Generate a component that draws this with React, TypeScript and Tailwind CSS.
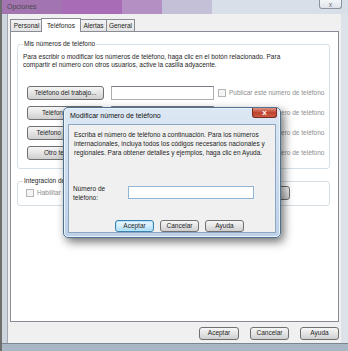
import React from "react";

const btn =
  "flex items-center justify-center border border-[#707070] rounded-[3px] bg-linear-to-b from-[#f6f6f6] via-[#e4e4e4] to-[#cfcfcf] text-[#1e1e1e] leading-none";

function Boton({ label, w, h = "h-[14px]" }: { label: string; w: string; h?: string }) {
  return <div className={`${btn} ${w} ${h} shrink-0`}>{label}</div>;
}

function FilaTelefono({ label }: { label: string }) {
  return (
    <div className="flex items-center h-[14px] ml-[4px]">
      <Boton label={label} w="w-[77px]" />
      <div className="ml-[7px] w-[103px] h-[14px] border border-[#abadb3] border-t-[#7a7d85] bg-white shrink-0" />
      <div className="ml-[4px] w-[8px] h-[8px] border border-[#b5b5b5] bg-[#f4f4f4] shrink-0" />
      <span className="ml-[3px] text-[#8d8d8d] whitespace-nowrap">Publicar este número de teléfono</span>
    </div>
  );
}

function ModalTelefono() {
  return (
    <div className="absolute left-[61px] top-[107px] w-[218px] h-[131px] flex flex-col border border-[#4f6f8f] rounded-[5px] bg-linear-to-b from-[#dde8f4] to-[#bcd0e7] shadow-[3px_4px_10px_rgba(0,0,0,0.55)] ring-1 ring-inset ring-[#e8f4fc]">
      {/* barra de título */}
      <div className="relative h-[16px] flex items-center pl-[6px] text-[#111]">
        <span className="text-[7px]">Modificar número de teléfono</span>
        <div className="absolute right-[3px] top-0 w-[25px] h-[10px] rounded-b-[3px] border border-t-0 border-[#7a2a22] bg-linear-to-b from-[#e39384] via-[#c04530] to-[#c85a40] flex items-center justify-center text-white text-[8px] font-bold leading-none">
          x
        </div>
      </div>
      {/* cliente */}
      <div className="mx-[4px] mb-[4px] flex-1 flex flex-col bg-[#f0f0f0] border border-[#8ea6c2]">
        <p className="pt-[5px] pl-[5px] pr-[4px] leading-[9px] text-[#1e1e1e]">
          Escriba el número de teléfono a continuación. Para los números internacionales, incluya todos los códigos
          necesarios nacionales y regionales. Para obtener detalles y ejemplos, haga clic en Ayuda.
        </p>
        <div className="mt-[27px] flex items-start pl-[4px]">
          <div className="w-[55px] leading-[9px] text-[#1e1e1e]">
            Número de
            <br />
            teléfono:
          </div>
          <div className="mt-[2px] w-[126px] h-[13px] border border-[#8fb5d8] bg-white" />
        </div>
        <div className="mt-[18px] flex gap-[6px] pl-[46px]">
          <div className="flex items-center justify-center w-[39px] h-[12px] rounded-[3px] border border-[#3c7fb1] ring-1 ring-inset ring-[#b8e6fa] bg-linear-to-b from-[#eaf6fd] via-[#d4eefc] to-[#a7d9f5] text-[#1e1e1e] leading-none">
            Aceptar
          </div>
          <Boton label="Cancelar" w="w-[39px]" h="h-[12px]" />
          <Boton label="Ayuda" w="w-[39px]" h="h-[12px]" />
        </div>
      </div>
    </div>
  );
}

export default function App() {
  return (
    <div
      className="relative w-[348px] h-[351px] overflow-hidden flex flex-col bg-[#dde2e8] border-l-2 border-[#6e6e6e] text-[6.5px]"
      style={{ fontFamily: '"Liberation Sans", Arial, sans-serif' }}
    >
      {/* barra de título de la ventana */}
      <div className="relative h-[14px] shrink-0 flex bg-[#c9bfd3]">
        <div className="w-[60px] h-full flex items-center pl-[5px] bg-[#a274b0]">
          <span className="text-[7px] text-[#4a4a4a]">Opciones</span>
        </div>
        <div className="w-[60px] h-full bg-[#a86cb6]" />
        <div className="w-[40px] h-full bg-[#b48fc4]" />
        <div className="w-[50px] h-full bg-[#c3c0d8]" />
        <div className="flex-1 h-full bg-[#d8dfe8]" />
        <div className="absolute right-[6px] top-0 w-[23px] h-[9px] rounded-b-[3px] border border-t-0 border-[#8a939e] bg-linear-to-b from-[#f4f6f8] to-[#dfe4ea] flex items-center justify-center text-[#6a7380] text-[7px] leading-none">
          x
        </div>
      </div>

      <div className="flex flex-1 min-h-0">
        <div className="w-[5px] shrink-0 bg-[#cfd5dc]" />
        {/* área cliente */}
        <div className="w-[334px] shrink-0 flex flex-col bg-[#f0f0f0] border-l border-[#a0a8b2]">
          {/* pestañas */}
          <div className="relative z-10 flex items-end h-[17px] pl-[2px] text-[#1e1e1e]">
            <div className="w-[33px] h-[12px] flex items-center justify-center border border-b-0 border-[#898c95] bg-linear-to-b from-[#f2f2f2] to-[#e3e3e3]">
              Personal
            </div>
            <div className="-ml-[2px] w-[40px] h-[14px] -mb-px flex items-center justify-center border border-b-0 border-[#898c95] bg-white">
              Teléfonos
            </div>
            <div className="-ml-px w-[27px] h-[12px] flex items-center justify-center border border-b-0 border-[#898c95] bg-linear-to-b from-[#f2f2f2] to-[#e3e3e3]">
              Alertas
            </div>
            <div className="-ml-px w-[29px] h-[12px] flex items-center justify-center border border-b-0 border-[#898c95] bg-linear-to-b from-[#f2f2f2] to-[#e3e3e3]">
              General
            </div>
          </div>

          {/* panel */}
          <div className="ml-[2px] w-[329px] h-[291px] border border-[#898c95] bg-white text-[#1e1e1e] px-[6px] pt-[8px]">
            <fieldset className="w-[313px] border border-[#d5dfe5] rounded-[3px] px-[5px] pb-[8px]">
              <legend className="px-[1px] leading-[8px]">Mis números de teléfono</legend>
              <p className="mt-[5px] leading-[8px] pr-[40px]">
                Para escribir o modificar los números de teléfono, haga clic en el botón relacionado. Para compartir el
                número con otros usuarios, active la casilla adyacente.
              </p>
              <div className="mt-[17px] flex flex-col gap-[6px]">
                <FilaTelefono label="Teléfono del trabajo..." />
                <FilaTelefono label="Teléfono móvil..." />
                <FilaTelefono label="Teléfono particular..." />
                <FilaTelefono label="Otro teléfono..." />
              </div>
            </fieldset>

            <fieldset className="mt-[8px] w-[313px] border border-[#d5dfe5] rounded-[3px] px-[5px] pb-[5px]">
              <legend className="px-[1px] leading-[8px]">Integración de Windows Live</legend>
              <div className="mt-[1px] flex items-center h-[14px] ml-[3px]">
                <div className="w-[8px] h-[8px] border border-[#b5b5b5] bg-[#f4f4f4] shrink-0" />
                <span className="ml-[3px] text-[#8d8d8d] whitespace-nowrap">Habilitar integración</span>
                <div className="ml-auto mr-[34px]">
                  <Boton label="Configurar..." w="w-[60px]" />
                </div>
              </div>
            </fieldset>
          </div>

          {/* botones inferiores */}
          <div className="mt-[5px] flex justify-end gap-[11px] pr-[2px]">
            <Boton label="Aceptar" w="w-[40px]" h="h-[13px]" />
            <Boton label="Cancelar" w="w-[39px]" h="h-[13px]" />
            <Boton label="Ayuda" w="w-[39px]" h="h-[13px]" />
          </div>
        </div>
        <div className="flex-1" />
      </div>

      {/* borde inferior */}
      <div className="h-[8px] shrink-0 border-t border-[#7d858f] bg-[#a9b6c6]" />

      <ModalTelefono />
    </div>
  );
}
